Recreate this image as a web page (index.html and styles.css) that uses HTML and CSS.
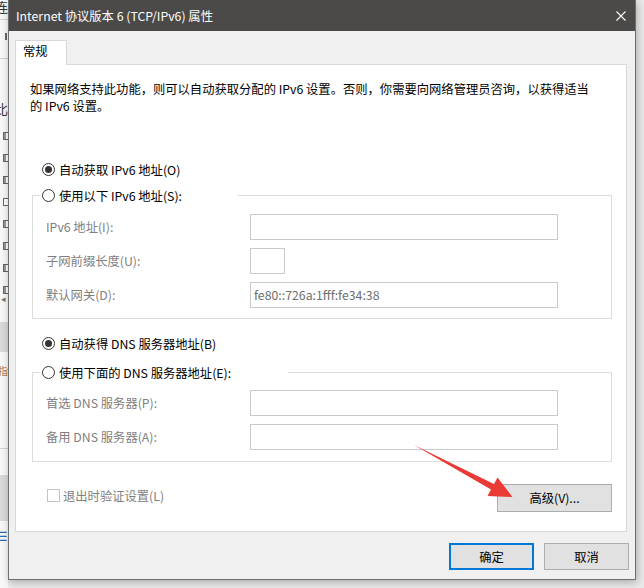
FILE: index.html
```html
<!DOCTYPE html>
<html lang="zh-CN">
<head>
<meta charset="utf-8">
<title>Internet 协议版本 6 (TCP/IPv6) 属性</title>
<link rel="stylesheet" href="styles.css">
</head>
<body>
<div class="screen">
  <div class="bgstrip">
    <div class="bs-char bs-c1">连</div>
    <div class="bs-rule bs-r1"></div>
    <div class="bs-mark"></div>
    <div class="bs-rule bs-r2"></div>
    <div class="bs-char bs-c2">比</div>
    <div class="bs-boxes">
      <span class="bs-box"></span><span class="bs-box"></span><span class="bs-box"></span><span class="bs-box empty"></span>
      <span class="bs-box"></span><span class="bs-box"></span><span class="bs-box"></span><span class="bs-box"></span>
    </div>
    <div class="bs-arrow">◂</div>
    <div class="bs-band bs-b1"></div>
    <div class="bs-char bs-c3">指</div>
    <div class="bs-rule bs-r3"></div>
    <div class="bs-band bs-b2"></div>
    <div class="bs-char bs-c4">☰</div>
  </div>

  <div class="dialog">
    <div class="titlebar">
      <span class="title">Internet 协议版本 6 (TCP/IPv6) 属性</span>
      <svg class="close" width="10" height="10" viewBox="0 0 10 10"><path d="M0.5 0.5 L9.5 9.5 M9.5 0.5 L0.5 9.5" stroke="#ffffff" stroke-width="1.1" fill="none"/></svg>
    </div>
    <div class="body">
      <div class="tabs"><div class="tab">常规</div></div>
      <div class="panel">
        <p class="desc">如果网络支持此功能，则可以自动获取分配的 IPv6 设置。否则，你需要向网络管理员咨询，以获得适当的 IPv6 设置。</p>

        <div class="opt first"><span class="radio on"></span>自动获取 IPv6 地址(O)</div>
        <fieldset class="group ip">
          <legend class="legend-ip"><span class="opt leg"><span class="radio"></span>使用以下 IPv6 地址(S):</span></legend>
          <div class="rows">
            <div class="field"><span class="lbl">IPv6 地址(I):</span><span class="input"></span></div>
            <div class="field"><span class="lbl">子网前缀长度(U):</span><span class="input short"></span></div>
            <div class="field"><span class="lbl">默认网关(D):</span><span class="input val">fe80::726a:1fff:fe34:38</span></div>
          </div>
        </fieldset>

        <div class="opt dns-auto"><span class="radio on"></span>自动获得 DNS 服务器地址(B)</div>
        <fieldset class="group dns">
          <legend class="legend-dns"><span class="opt leg"><span class="radio"></span>使用下面的 DNS 服务器地址(E):</span></legend>
          <div class="rows">
            <div class="field"><span class="lbl">首选 DNS 服务器(P):</span><span class="input"></span></div>
            <div class="field"><span class="lbl">备用 DNS 服务器(A):</span><span class="input"></span></div>
          </div>
        </fieldset>

        <div class="footer">
          <span class="check"><span class="checkbox"></span>退出时验证设置(L)</span>
          <button class="btn adv">高级(V)...</button>
        </div>
      </div>
      <div class="actions">
        <button class="btn act default">确定</button>
        <button class="btn act">取消</button>
      </div>
    </div>
  </div>

  <svg class="arrow" width="644" height="588" viewBox="0 0 644 588">
    <polygon points="414,445 494,484 497.5,477.5 512.5,497 487.5,496 491,489.5" fill="#ea3a35"/>
  </svg>
</div>
</body>
</html>
```

FILE: styles.css
```css
* { box-sizing: border-box; }
html, body { margin: 0; padding: 0; }
body {
  width: 644px;
  height: 588px;
  overflow: hidden;
  background: #e9e9e9;
  font-family: "Noto Sans CJK SC", "Noto Sans", sans-serif;
  font-size: 12.3px;
  color: #000;
}
.screen {
  position: relative;
  width: 644px;
  height: 588px;
  display: flex;
  align-items: flex-start;
}

/* background window strip */
.bgstrip {
  width: 8px;
  height: 588px;
  flex-shrink: 0;
  background: #f8f8f8;
  display: flex;
  flex-direction: column;
  overflow: hidden;
}
.bs-char {
  display: flex;
  justify-content: flex-end;
  height: 14px;
  line-height: 14px;
  font-size: 13px;
  color: #333;
  white-space: nowrap;
}
.bs-c1 { margin-top: 0; }
.bs-rule { height: 1px; background: #d2d2d2; }
.bs-r1 { margin-top: 5px; }
.bs-mark { margin: 13px 0 0 5px; width: 2px; height: 7px; background: #666; }
.bs-r2 { margin-top: 18px; }
.bs-c2 { margin-top: 43px; }
.bs-boxes { display: flex; flex-direction: column; gap: 14px; margin-top: 16px; }
.bs-box { display: block; margin-left: 3px; width: 8px; height: 8px; border: 1px solid #666; border-right: 0; background: #fff; box-shadow: inset 2px 0 0 #999; }
.bs-box.empty { box-shadow: none; }
.bs-arrow { margin-top: 0; height: 10px; line-height: 10px; font-size: 9px; color: #777; padding-left: 1px; }
.bs-band { background: #dadada; }
.bs-b1 { margin-top: 18px; height: 30px; }
.bs-c3 { margin-top: 12px; color: #b07a40; font-size: 10px; }
.bs-r3 { margin-top: 70px; }
.bs-b2 { margin-top: 26px; height: 46px; }
.bs-c4 { margin-top: 8px; color: #2d6db5; font-size: 13px; }

/* dialog */
.dialog {
  width: 628px;
  height: 580px;
  flex-shrink: 0;
  background: #f0f0f0;
  border: 1px solid #6f6f6f;
  border-top: 0;
  box-shadow: 1px 2px 8px rgba(0, 0, 0, 0.28);
  display: flex;
  flex-direction: column;
}
.titlebar {
  height: 31px;
  flex-shrink: 0;
  background: #4b4a48;
  color: #ffffff;
  display: flex;
  align-items: center;
  justify-content: space-between;
  padding: 0 9px 0 7px;
  font-size: 12.3px;
}
.title { line-height: 16px; padding-top: 1px; }
.close { display: block; }

.body {
  flex: 1;
  padding: 9px 0 0 6px;
  display: flex;
  flex-direction: column;
}
.tabs { display: flex; height: 24px; }
.tab {
  position: relative;
  z-index: 1;
  width: 52px;
  height: 25px;
  background: #fff;
  border: 1px solid #d9d9d9;
  border-bottom: 0;
  padding-left: 7px;
  line-height: 21px;
}
.panel {
  width: 612px;
  height: 468px;
  background: #fff;
  border: 1px solid #d9d9d9;
  padding: 16px 14px 0 14px;
}
.desc {
  margin: 0;
  width: 568px;
  line-height: 17px;
}

.opt {
  display: flex;
  align-items: center;
  height: 17px;
  padding-left: 12px;
  white-space: nowrap;
}
.opt.first { margin-top: 46px; }
.opt.leg { padding-left: 2px; }
.opt.dns-auto { margin-top: 16px; }
.radio {
  width: 13px;
  height: 13px;
  flex-shrink: 0;
  border: 1px solid #333;
  border-radius: 50%;
  background: #fff;
  margin-right: 4px;
  display: flex;
  align-items: center;
  justify-content: center;
}
.radio.on::after {
  content: "";
  width: 7px;
  height: 7px;
  border-radius: 50%;
  background: #333;
}

.group {
  margin: 9px 0 0 2px;
  padding: 0;
  min-width: 0;
  width: 580px;
  border: 1px solid #dcdcdc;
}
.group.dns { margin-top: 12px; }
.group legend {
  margin-left: 7px;
  padding: 0;
}
.legend-ip { width: 198px; }
.legend-dns { width: 248px; }
.rows {
  display: flex;
  flex-direction: column;
  gap: 8px;
  padding: 10px 0 10px 13px;
}
.group.dns .rows { padding: 9px 0 11px 13px; }
.field {
  display: grid;
  grid-template-columns: 204px auto;
  align-items: center;
}
.lbl { color: #808080; white-space: nowrap; }
.input {
  display: block;
  width: 308px;
  height: 26px;
  border: 1px solid #cacaca;
  background: #fff;
}
.input.short { width: 35px; }
.input.val {
  padding-left: 3px;
  line-height: 24px;
  color: #6d6d6d;
}

.footer {
  margin-top: 22px;
  display: flex;
  align-items: center;
  justify-content: space-between;
}
.check {
  display: flex;
  align-items: center;
  padding-left: 17px;
  margin-bottom: 5px;
  color: #808080;
}
.checkbox {
  width: 13px;
  height: 13px;
  border: 1px solid #c4c4c4;
  background: #fff;
  margin-right: 3px;
}
.btn {
  font: inherit;
  color: #000;
  background: #e1e1e1;
  border: 1px solid #adadad;
  padding: 0;
  margin: 0;
}
.adv { width: 115px; height: 28px; }

.actions {
  display: flex;
  justify-content: flex-end;
  gap: 10px;
  padding: 11px 6px 0 0;
}
.act { width: 85px; height: 27px; }
.act.default { border: 2px solid #0078d7; }

.arrow {
  position: absolute;
  left: 0;
  top: 0;
  pointer-events: none;
}
```
